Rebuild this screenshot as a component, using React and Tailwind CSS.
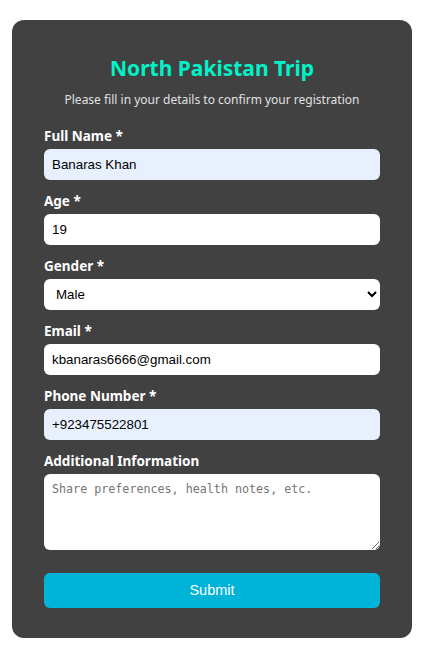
export default function App() {
    const labelCls = "block text-[13.5px] leading-[18px] font-bold text-white mb-1";
    const inputCls = "block w-full h-[31px] rounded-md px-2 text-[13.33px] text-black outline-none";
    const arial = { fontFamily: '"Liberation Sans", Arial, sans-serif' };

    return (
        <div className="min-h-screen bg-white pt-5 px-3" style={{ fontFamily: '"Noto Sans", sans-serif' }}>
            <div className="w-[400px] bg-[#414141] rounded-xl px-8 pt-[33px] pb-[30px]">
                <h1 className="text-center text-[21px] leading-[30px] font-bold text-[#00f2c8]">
                    North Pakistan Trip
                </h1>
                <p className="text-center text-[12px] leading-[18px] text-[#e0e0e0] mt-2 mb-[18px]">
                    Please fill in your details to confirm your registration
                </p>

                <form>
                    <div className="mb-3">
                        <label className={labelCls}>Full Name *</label>
                        <input className={inputCls + " bg-[#e8f0fe]"} style={arial} defaultValue="Banaras Khan" />
                    </div>
                    <div className="mb-3">
                        <label className={labelCls}>Age *</label>
                        <input className={inputCls + " bg-white"} style={arial} defaultValue="19" />
                    </div>
                    <div className="mb-3">
                        <label className={labelCls}>Gender *</label>
                        <select className={inputCls + " bg-white"} style={arial} defaultValue="Male">
                            <option>Male</option>
                            <option>Female</option>
                            <option>Other</option>
                        </select>
                    </div>
                    <div className="mb-3">
                        <label className={labelCls}>Email *</label>
                        <input className={inputCls + " bg-white"} style={arial} defaultValue="kbanaras6666@gmail.com" />
                    </div>
                    <div className="mb-3">
                        <label className={labelCls}>Phone Number *</label>
                        <input className={inputCls + " bg-[#e8f0fe]"} style={arial} defaultValue="+923475522801" />
                    </div>
                    <div>
                        <label className={labelCls}>Additional Information</label>
                        <textarea
                            className="block w-full h-[76px] rounded-md bg-white px-2 py-[7px] text-[11.7px] text-black outline-none placeholder:text-[#757575]"
                            style={{ fontFamily: '"DejaVu Sans Mono", monospace' }}
                            placeholder="Share preferences, health notes, etc."
                        />
                    </div>
                    <button
                        type="button"
                        className="mt-[23px] w-full h-[35px] rounded-md bg-[#00b4d8] text-white text-[14.5px]"
                        style={arial}
                    >
                        Submit
                    </button>
                </form>
            </div>
        </div>
    );
}
